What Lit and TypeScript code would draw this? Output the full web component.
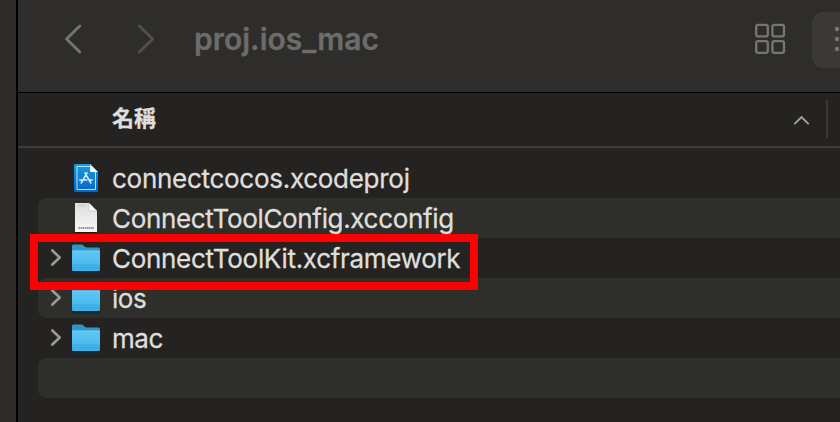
import { LitElement, html, css, svg, nothing } from "lit";
import { customElement, property } from "lit/decorators.js";

type Kind = "project" | "document" | "folder";
interface Entry {
  name: string;
  kind: Kind;
  track: number;
}

const ENTRIES: Entry[] = [
  { name: "connectcocos.xcodeproj", kind: "project", track: -0.28 },
  { name: "ConnectToolConfig.xcconfig", kind: "document", track: -0.34 },
  { name: "ConnectToolKit.xcframework", kind: "folder", track: -0.3 },
  { name: "ios", kind: "folder", track: -0.5 },
  { name: "mac", kind: "folder", track: -0.5 },
];

@customElement("file-icon")
class FileIcon extends LitElement {
  @property() kind: Kind = "folder";

  static styles = css`
    :host { display: block; width: 32px; height: 40px; }
    svg { display: block; }
  `;

  private project() {
    return svg`
      <defs><linearGradient id="p" x1="0" y1="0" x2="0" y2="1">
        <stop offset="0" stop-color="#139fe0"/><stop offset="1" stop-color="#0b62c4"/>
      </linearGradient></defs>
      <path d="M5.500 6H20L28 14V32.500Q28 34 26.500 34H5.500Q4 34 4 32.500V7.500Q4 6 5.500 6Z" fill="#062c50" transform="translate(0 .8)"/>
      <path d="M5.500 6H20L28 14V32.500Q28 34 26.500 34H5.500Q4 34 4 32.500V7.500Q4 6 5.500 6Z" fill="url(#p)"/>
      <path d="M20 8.500H7V31.500H25.500V14" fill="none" stroke="#b5e2f8" stroke-width="1"/>
      <path d="M20 6L28 14H21.500Q20 14 20 12.500Z" fill="#f1f6f8"/>
      <g fill="none" stroke="#d0ebfb" stroke-width="1.600" stroke-linecap="round">
        <path d="M17 14.800L11.200 25M15 14.800L20.800 25M9.800 22H16.800M19 22H22.200"/>
      </g>`;
  }

  private document() {
    return svg`
      <defs><linearGradient id="d" x1="0" y1="0" x2="0" y2="1">
        <stop offset="0" stop-color="#dedede"/><stop offset="1" stop-color="#f8f8f8"/>
      </linearGradient></defs>
      <path d="M5 5H19L27 13V34H5Z" fill="#141414" transform="translate(0 .7)"/>
      <path d="M5 5H19L27 13V34H5Z" fill="url(#d)"/>
      <path d="M19 5L27 13H20.500Q19 13 19 11.500Z" fill="#fafafa" stroke="#bcbcbc" stroke-width=".6"/>
      <path d="M7.500 7.700H16" stroke="#c2c2c2" stroke-width=".8"/>
      <path d="M8.500 30H24" stroke="#777" stroke-width="1.400" stroke-dasharray="1.600 .5"/>`;
  }

  private folder() {
    return svg`
      <defs><linearGradient id="f" x1="0" y1="0" x2="0" y2="1">
        <stop offset="0" stop-color="#5fc6f3"/><stop offset=".7" stop-color="#4abaee"/><stop offset="1" stop-color="#3eaee5"/>
      </linearGradient></defs>
      <path d="M2 11H30V32.200Q30 34 28.500 34H3.500Q2 34 2 32.200Z" fill="#102b3a"/>
      <path d="M2 6.500Q2 5 3.500 5H11Q12.200 5 13 5.800L14.800 7.300Q15.700 8 17 8H28.500Q30 8 30 9.500V20H2Z" fill="#2f96c9"/>
      <path d="M2 12Q2 11 3.200 11H28.800Q30 11 30 12V29.800Q30 31.300 28.500 31.300H3.500Q2 31.300 2 29.800Z" fill="url(#f)" transform="translate(0 .2)"/>
      <path d="M2.500 11.500H29.500" stroke="#83d8fa" stroke-width=".7"/>
      <path d="M2 25.700H30M2 28.400H30" stroke="#2d9cd5" stroke-width=".7"/>`;
  }

  render() {
    const folder = this.kind === "folder";
    const art = folder ? this.folder() : this.kind === "project" ? this.project() : this.document();
    return html`<svg width="32" height="40" viewBox=${folder ? "0 -1.5 32 40" : "0 0 32 40"}>${art}</svg>`;
  }
}

@customElement("file-row")
class FileRow extends LitElement {
  @property({ attribute: false }) entry?: Entry;

  static styles = css`
    :host { display: flex; align-items: center; height: 40px; border-radius: 8px 0 0 8px; }
    .disclosure { width: 32px; height: 40px; flex: none; }
    .disclosure svg { display: block; }
    .name {
      margin: 2px 0 0 10px; font-size: 26px; line-height: 40px; white-space: nowrap;
      color: #dfdedc; -webkit-text-stroke: 0.3px #dfdedc;
    }
  `;

  render() {
    const e = this.entry;
    if (!e) return nothing;
    return html`
      <div class="disclosure">
        ${e.kind === "folder"
          ? html`<svg width="32" height="40" viewBox="0 0 32 40">
              <path d="M14.300 12.500L21.700 19.500L14.300 26.500" fill="none" stroke="#9b9a99" stroke-width="2.600" stroke-linecap="round" stroke-linejoin="round" />
            </svg>`
          : nothing}
      </div>
      <file-icon .kind=${e.kind}></file-icon>
      <span class="name" style="letter-spacing:${e.track}px">${e.name}</span>
    `;
  }
}

@customElement("app-root")
class AppRoot extends LitElement {
  static styles = css`
    :host {
      display: flex; position: relative; width: 840px; height: 422px; overflow: hidden;
      background: #242321; font-family: Inter, "Noto Sans CJK TC", sans-serif;
    }
    .sidebar { width: 16px; flex: none; background: #2d2c2a; border-right: 2px solid #000; }
    .window { flex: 1; min-width: 0; display: flex; flex-direction: column; }
    .toolbar {
      box-sizing: border-box; height: 93px; flex: none; display: flex; align-items: flex-start;
      background: #2e2d2b; border-bottom: 1px solid #000;
    }
    .nav { margin: 20px 0 0 42px; flex: none; }
    .title {
      margin: 19px 0 0 34px; font-size: 30px; line-height: 40px; font-weight: 600;
      color: #6d6c6a; -webkit-text-stroke: 0.3px #6d6c6a; letter-spacing: 0;
    }
    .views { margin-left: auto; display: flex; flex: none; }
    .grid { margin-top: 20px; }
    .selected { width: 28px; height: 56px; margin: 12px 0 0 22px; background: #3a3937; border-radius: 11px 0 0 11px; }
    svg { display: block; }
    .columns {
      box-sizing: border-box; height: 55px; flex: none; display: flex; align-items: center;
      padding-left: 94px; border-bottom: 2px solid #3d3c3b;
    }
    .label {
      font-family: "Noto Sans CJK TC", sans-serif; font-size: 22px; font-weight: 700; line-height: 40px;
      color: #dfdedc; -webkit-text-stroke: 0.3px #dfdedc; margin-top: -7px;
    }
    .sort { margin: 0 0 0 auto; }
    .divider { width: 2px; height: 38px; margin: -1px 12px 0 14px; background: #3b3a38; }
    .list { padding: 10px 0 0 20px; }
    .stripe { background: #2e2f2b; }
    .blank { height: 40px; border-radius: 8px 0 0 8px; }
    .highlight { position: absolute; left: 30px; top: 234px; box-sizing: border-box; width: 448px; height: 56px; border: 8px solid #fe0000; }
  `;

  render() {
    return html`
      <div class="sidebar"></div>
      <div class="window">
        <div class="toolbar">
          <svg class="nav" width="100" height="40" viewBox="0 0 100 40" fill="none" stroke-width="3" stroke-linecap="round" stroke-linejoin="round">
            <path d="M19.800 6L6.500 19L19.800 32" stroke="#757472" />
            <path d="M79.400 6L92.700 19L79.400 32" stroke="#51504e" />
          </svg>
          <div class="title">proj.ios_mac</div>
          <div class="views">
            <svg class="grid" width="36" height="40" viewBox="0 0 36 40" fill="none" stroke="#777674" stroke-width="2.300">
              <rect x="2.200" y="4.800" width="11.600" height="11.600" rx="2" />
              <rect x="18.400" y="4.800" width="11.600" height="11.600" rx="2" />
              <rect x="2.200" y="21.200" width="11.600" height="11.600" rx="2" />
              <rect x="18.400" y="21.200" width="11.600" height="11.600" rx="2" />
            </svg>
            <div class="selected">
              <svg width="28" height="56" viewBox="0 0 28 56" fill="#777674">
                <circle cx="25" cy="17" r="2.200" />
                <circle cx="25" cy="27" r="2.200" />
                <circle cx="25" cy="37" r="2.200" />
              </svg>
            </div>
          </div>
        </div>
        <div class="columns">
          <span class="label">名稱</span>
          <svg class="sort" width="20" height="20" viewBox="0 0 20 20">
            <path d="M2.300 14.200L9.500 7L16.700 14.200" fill="none" stroke="#a4a3a1" stroke-width="1.900" />
          </svg>
          <div class="divider"></div>
        </div>
        <div class="list">
          ${ENTRIES.map((e, i) => html`<file-row class=${i % 2 ? "stripe" : ""} .entry=${e}></file-row>`)}
          <div class="stripe blank"></div>
        </div>
      </div>
      <div class="highlight"></div>
    `;
  }
}
